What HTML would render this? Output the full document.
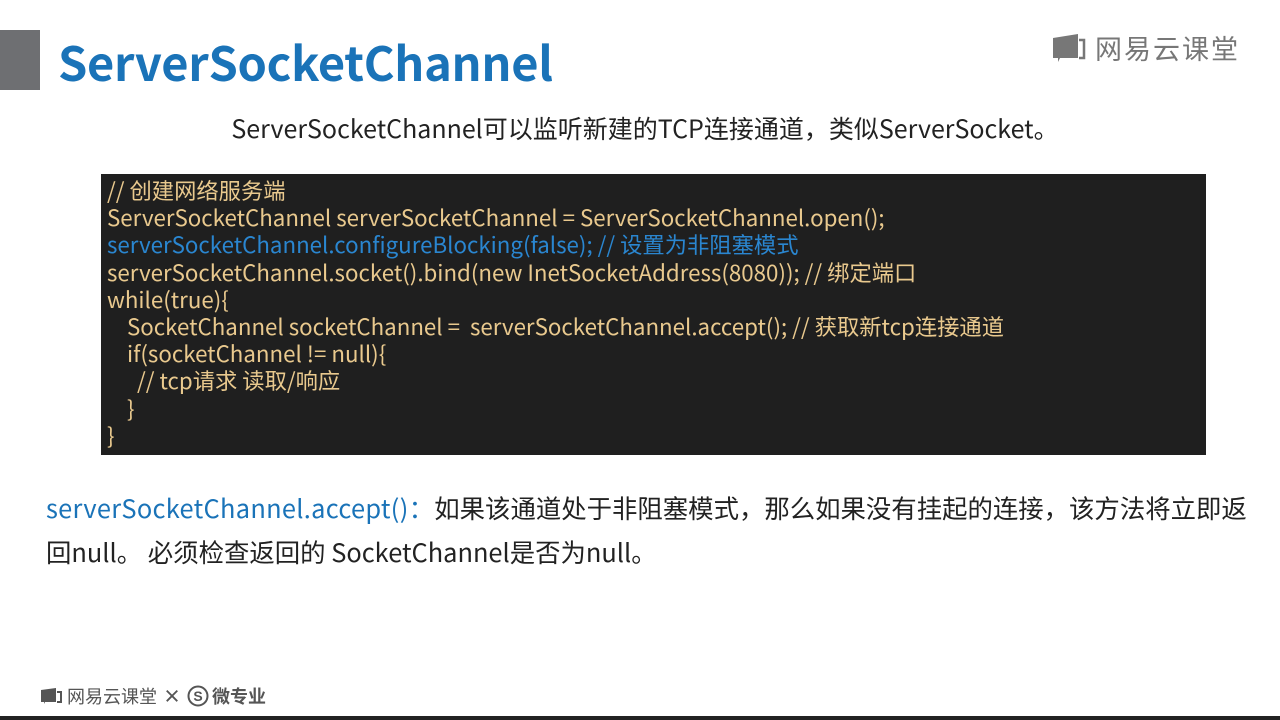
<!DOCTYPE html>
<html><head><meta charset="utf-8"><style>
*{margin:0;padding:0;box-sizing:border-box}
body{width:1280px;height:720px;background:#fff;position:relative;overflow:hidden;font-family:"Noto Sans CJK SC","Liberation Sans",sans-serif}
.bar{position:absolute;left:0;top:30px;width:40px;height:60px;background:#6e6f72}
.title{position:absolute;left:58px;top:26px;font-size:47px;font-weight:bold;color:#1a73b8;line-height:70px;letter-spacing:-0.3px}
.logo{position:absolute;left:1052px;top:30px;display:flex;align-items:center;color:#777;font-size:27px;line-height:36px}
.sub{position:absolute;left:0;width:1290px;text-align:center;top:110px;font-size:25px;color:#222;line-height:36px}
.code{position:absolute;left:101px;top:174px;width:1105px;height:281px;background:#1f1f1f;padding:3px 0 0 6px;color:#e9c98e;font-size:22.3px;line-height:27.2px;white-space:pre}
.b{color:#2a86d0}
.txt{position:absolute;left:46px;top:486px;font-size:25.4px;color:#222;line-height:44px;width:1230px}
.txt .k{color:#1a73b8;letter-spacing:0.3px}
.foot{position:absolute;left:40px;top:684px;display:flex;align-items:center;color:#555;font-size:18px;font-weight:bold;line-height:24px}
.line{position:absolute;left:0;top:716px;width:1280px;height:4px;background:#222}
</style></head><body>
<div class="bar"></div>
<div class="title">ServerSocketChannel</div>
<div class="logo"><svg width="34" height="32" viewBox="0 0 34 32"><path d="M1 6 L26 2 L26 26 L8 26 L6 30 L6 26 L1 26Z" fill="#777"/><path d="M27 8 L32 8 L32 26 L27 26" fill="none" stroke="#777" stroke-width="2.5"/></svg><span style="margin-left:9px;letter-spacing:2px">网易云课堂</span></div>
<div class="sub">ServerSocketChannel可以监听新建的TCP连接通道，类似ServerSocket。</div>
<div class="code">// 创建网络服务端
ServerSocketChannel serverSocketChannel = ServerSocketChannel.open();
<span class="b">serverSocketChannel.configureBlocking(false); // 设置为非阻塞模式</span>
serverSocketChannel.socket().bind(new InetSocketAddress(8080)); // 绑定端口
while(true){
    SocketChannel socketChannel =  serverSocketChannel.accept(); // 获取新tcp连接通道
    if(socketChannel != null){
      // tcp请求 读取/响应
    }
}</div>
<div class="txt"><span class="k">serverSocketChannel.accept()：</span>如果该通道处于非阻塞模式，那么如果没有挂起的连接，该方法将立即返<br>回null。 必须检查返回的 SocketChannel是否为null。</div>
<div class="foot"><svg width="22" height="18" viewBox="0 0 22 18"><path d="M1 3 L16 1 L16 15 L5 15 L4 17 L4 15 L1 15Z" fill="#555"/><path d="M17 5 L21 5 L21 15 L17 15" fill="none" stroke="#555" stroke-width="2"/></svg><span style="margin-left:5px;font-weight:normal">网易云课堂</span><span style="margin:0 6px">×</span><svg width="22" height="22" viewBox="0 0 22 22"><circle cx="11" cy="11" r="9.5" fill="none" stroke="#555" stroke-width="2"/><text x="11" y="16" font-size="14" text-anchor="middle" fill="#555" font-weight="bold" font-family="Liberation Sans">S</text></svg><span style="margin-left:3px">微专业</span></div>
<div class="line"></div>
</body></html>
